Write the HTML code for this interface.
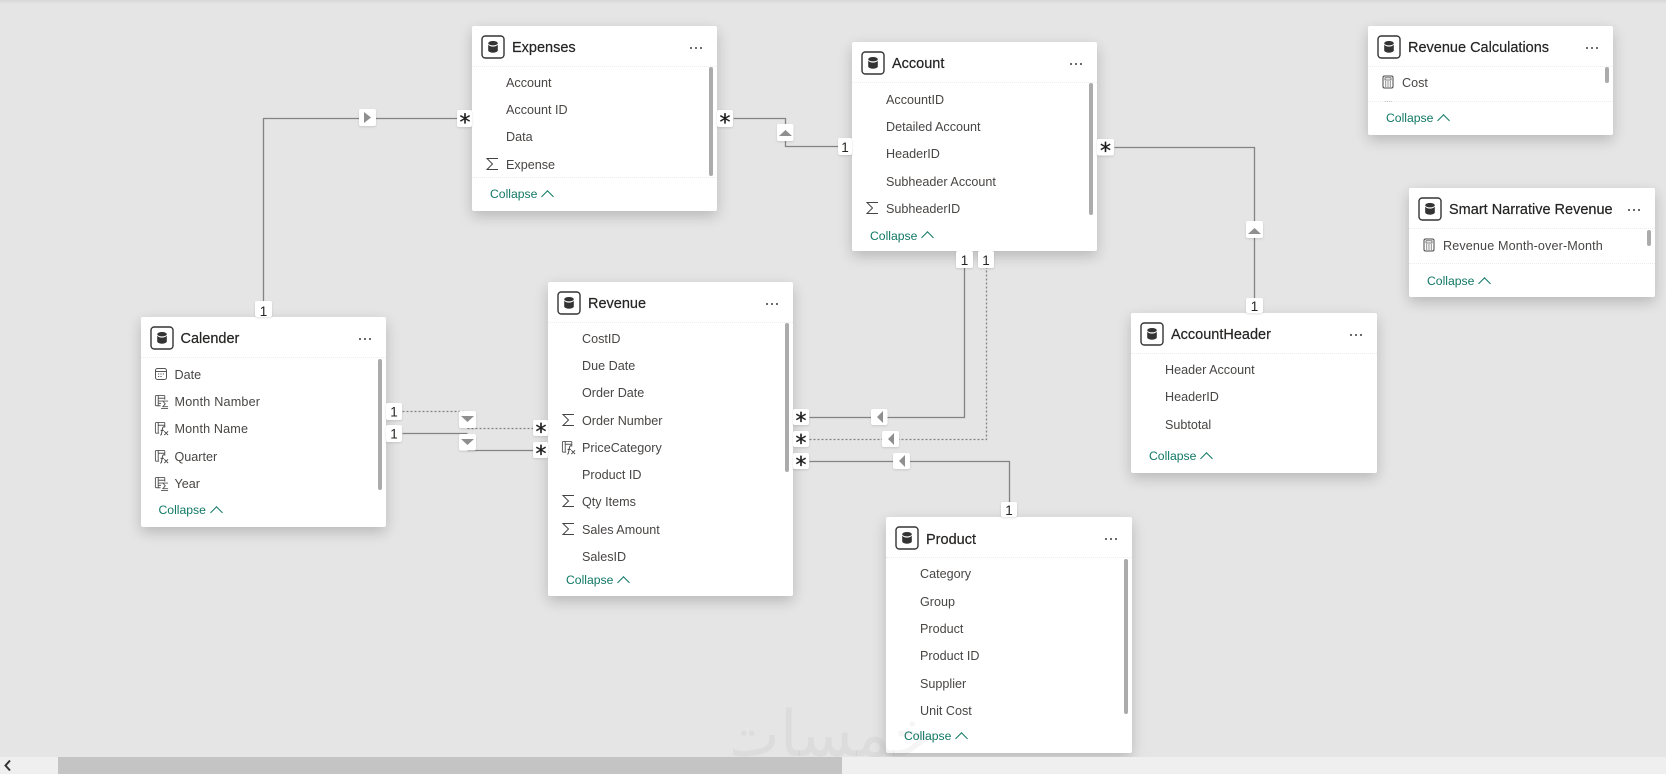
<!DOCTYPE html>
<html><head><meta charset="utf-8"><title>Model</title>
<style>
html,body{margin:0;padding:0;width:1666px;height:774px;overflow:hidden;background:#e5e5e5}
body{position:relative;font-family:"Liberation Sans",sans-serif}
#top{position:absolute;left:0;top:0;width:1666px;height:4px;background:linear-gradient(#d6d6d6,#e5e5e5)}
.c{position:absolute;background:#fff;border-radius:2px;box-shadow:0 5px 14px rgba(0,0,0,.2)}
.c>svg.db{position:absolute;left:9px;top:9px;width:24px;height:24px}
.t{position:absolute;left:40px;top:11px;line-height:22px;font-size:14.5px;color:#252423;white-space:nowrap;-webkit-text-stroke:.2px #252423}
.d{position:absolute;right:14px;top:20.5px;width:13px;height:3px}
.d:before{content:"";position:absolute;left:0;top:0;width:2.4px;height:2.4px;border-radius:50%;background:#3a3a3a;box-shadow:5px 0 #3a3a3a,10px 0 #3a3a3a}
.s{position:absolute;left:0;right:0;top:40px;height:0;border-top:1px dotted #ececec}
.f{position:absolute;left:34px;line-height:20px;margin-top:-9.5px;font-size:12.6px;color:#484644;white-space:nowrap}
.k{position:absolute;left:18px;line-height:20px;margin-top:-10px;font-size:12.2px;color:#117865;white-space:nowrap}
.k:after{content:"";display:inline-block;width:8px;height:8px;border-left:1px solid #117865;border-top:1px solid #117865;transform:rotate(45deg);margin-left:6px;position:relative;top:2.5px}
.b{position:absolute;width:4px;background:#ababab;border-radius:2px}
.i{position:absolute;left:13px;width:14px;height:14px;margin-top:-7px;fill:none;stroke:#444;stroke-width:1}
#wm{position:absolute;left:733px;top:690px;width:200px;height:67px;overflow:hidden;font-family:"DejaVu Sans",sans-serif;font-size:64px;line-height:90px;color:rgba(0,0,0,.04);text-align:center;white-space:nowrap;z-index:5}
#bar{position:absolute;left:0;top:757px;width:1666px;height:17px;background:#efefef;z-index:6}
#th{position:absolute;left:58px;top:0;width:784px;height:17px;background:#c4c4c4}
#ar{position:absolute;left:3px;top:2px;width:9px;height:13px}
svg#l{position:absolute;left:0;top:0;z-index:1}
.c{z-index:2}
svg#o{position:absolute;left:0;top:0;z-index:3}
</style></head><body>
<div id="top"></div>
<svg width="0" height="0" style="position:absolute"><defs>
<symbol id="db" viewBox="0 0 24 24"><rect x="1" y="1" width="22" height="22" rx="3.2" fill="#fff" stroke="#333" stroke-width="1.4"/><ellipse cx="12" cy="8.2" rx="4.8" ry="2.2" fill="#333"/><path d="M7.2 9.8v5.600c0 1.300 2.200 2.300 4.800 2.300s4.800-1 4.800-2.300V9.800c-1 1.200-2.800 1.800-4.800 1.800s-3.800-.6-4.800-1.800z" fill="#333"/></symbol>
<symbol id="sg" viewBox="0 0 14 14"><path d="M13 1.500H2L7.500 7 2 12.500h11" stroke="#444" stroke-width="1" fill="none"/></symbol>
<symbol id="ca" viewBox="0 0 14 14"><rect x="1.500" y="1.500" width="11" height="11" rx="2" fill="none" stroke="#555"/><path d="M1.500 4.500h11" stroke="#555"/><path d="M4 7h1.200M6.400 7h1.200M8.800 7h1.200M4 9.500h1.200M6.400 9.500h1.200" stroke="#555"/></symbol>
<symbol id="ts" viewBox="0 0 16 16"><path d="M7 12.500H2.500a1 1 0 0 1-1-1v-9a1 1 0 0 1 1-1h8a1 1 0 0 1 1 1V6M4.500 1.500v11M4.500 4.500h7M4.500 7.500h5M4.500 10h3" fill="none" stroke="#555"/><path d="M15 7.500H9.500L12 10.500 9.500 13.500H15M7.500 15.500H15" fill="none" stroke="#555"/></symbol>
<symbol id="fx" viewBox="0 0 16 16"><path d="M5.500 13H2.500a1 1 0 0 1-1-1V2.500a1 1 0 0 1 1-1h8a1 1 0 0 1 1 1V7M4.500 1.500V13M4.500 4.500h7" fill="none" stroke="#555"/><path d="M6.500 15c1.500 0 1.500-1 1.800-3l.7-4c.3-1.500 1-2 2-2M7 10h3.500M11 11l4 4M15 11l-4 4" fill="none" stroke="#444"/></symbol>
<symbol id="cl" viewBox="0 0 14 14"><rect x="2" y="1" width="10" height="12" rx="1.500" fill="none" stroke="#444"/><rect x="4" y="2.800" width="6" height="2.200" fill="none" stroke="#444" stroke-width=".7"/><path d="M4 7h1.200M6.400 7h1.200M8.800 7h1.200M4 9h1.200M6.400 9h1.200M8.800 9h1.200M4 11h1.200M6.400 11h1.200M8.800 11h1.200" stroke="#444"/></symbol>
</defs></svg>

<svg id="l" width="1666" height="774" fill="none" stroke="#838383" stroke-width="1.300">
<g transform="translate(.5 .5)">
<path d="M263 301V118H458"/>
<path d="M733 118H785V146H840"/>
<path d="M1114 147H1254V300"/>
<path d="M964 266V417H809"/>
<path d="M986 266V439H809" stroke-dasharray="2 2"/>
<path d="M1009 503V461H809"/>
<path d="M402 411H467M467 428H533" stroke-dasharray="2 2"/>
<path d="M402 433H467M467 450H533"/>
</g>
</svg>

<div class="c" style="left:472px;top:26px;width:245px;height:185px">
<svg class="db"><use href="#db"/></svg><div class="t">Expenses</div><div class="d"></div><div class="s"></div>
<div class="f" style="top:56px">Account</div><div class="f" style="top:83px">Account ID</div><div class="f" style="top:110px">Data</div><svg class="i" style="top:138px"><use href="#sg"/></svg><div class="f" style="top:138px">Expense</div>
<div class="s" style="top:151px"></div><div class="k" style="top:168px">Collapse</div><div class="b" style="left:237px;top:41px;height:109px"></div>
</div>

<div class="c" style="left:852px;top:42px;width:245px;height:209px">
<svg class="db"><use href="#db"/></svg><div class="t">Account</div><div class="d"></div><div class="s"></div>
<div class="f" style="top:57px">AccountID</div><div class="f" style="top:84.500px">Detailed Account</div><div class="f" style="top:111.500px">HeaderID</div><div class="f" style="top:139.500px">Subheader Account</div><svg class="i" style="top:166px"><use href="#sg"/></svg><div class="f" style="top:166px">SubheaderID</div>
<div class="k" style="top:193.500px">Collapse</div><div class="b" style="left:237px;top:41px;height:132px"></div>
</div>

<div class="c" style="left:1368px;top:26px;width:245px;height:109px">
<svg class="db"><use href="#db"/></svg><div class="t">Revenue Calculations</div><div class="d"></div><div class="s"></div>
<svg class="i" style="top:56px"><use href="#cl"/></svg><div class="f" style="top:56px">Cost</div>
<div style="position:absolute;left:17px;top:75px;width:8px;height:1px;background:#ccc"></div>
<div class="s" style="top:75px"></div><div class="k" style="top:92px">Collapse</div><div class="b" style="left:237px;top:41px;height:16px"></div>
</div>

<div class="c" style="left:1409px;top:188px;width:246px;height:109px">
<svg class="db"><use href="#db"/></svg><div class="t">Smart Narrative Revenue</div><div class="d"></div><div class="s"></div>
<svg class="i" style="top:57px"><use href="#cl"/></svg><div class="f" style="top:57px;letter-spacing:.13px">Revenue Month-over-Month</div>
<div class="s" style="top:75px"></div><div class="k" style="top:93px">Collapse</div><div class="b" style="left:238px;top:42px;height:16px"></div>
</div>

<div class="c" style="left:140.500px;top:317px;width:245.500px;height:210px">
<svg class="db"><use href="#db"/></svg><div class="t">Calender</div><div class="d"></div><div class="s"></div>
<svg class="i" style="top:57px"><use href="#ca"/></svg><div class="f" style="top:57px">Date</div>
<svg class="i" style="top:84px;width:15px;height:15px"><use href="#ts"/></svg><div class="f" style="top:84px;letter-spacing:.2px">Month Namber</div>
<svg class="i" style="top:111px;width:15px;height:15px"><use href="#fx"/></svg><div class="f" style="top:111px;letter-spacing:.15px">Month Name</div>
<svg class="i" style="top:139px;width:15px;height:15px"><use href="#fx"/></svg><div class="f" style="top:139px">Quarter</div>
<svg class="i" style="top:166px;width:15px;height:15px"><use href="#ts"/></svg><div class="f" style="top:166px">Year</div>
<div class="k" style="top:193px">Collapse</div><div class="b" style="left:237.500px;top:42px;height:131px"></div>
</div>

<div class="c" style="left:548px;top:282px;width:245px;height:314px">
<svg class="db"><use href="#db"/></svg><div class="t">Revenue</div><div class="d"></div><div class="s"></div>
<div class="f" style="top:56px">CostID</div><div class="f" style="top:83px">Due Date</div><div class="f" style="top:110px">Order Date</div>
<svg class="i" style="top:138px"><use href="#sg"/></svg><div class="f" style="top:138px">Order Number</div>
<svg class="i" style="top:165px;width:15px;height:15px"><use href="#fx"/></svg><div class="f" style="top:165px">PriceCategory</div>
<div class="f" style="top:192px">Product ID</div>
<svg class="i" style="top:219px"><use href="#sg"/></svg><div class="f" style="top:219px">Qty Items</div>
<svg class="i" style="top:247px"><use href="#sg"/></svg><div class="f" style="top:247px">Sales Amount</div>
<div class="f" style="top:274px">SalesID</div>
<div class="k" style="top:298px">Collapse</div><div class="b" style="left:237px;top:41px;height:149px"></div>
</div>

<div class="c" style="left:1131px;top:313px;width:246px;height:160px">
<svg class="db"><use href="#db"/></svg><div class="t">AccountHeader</div><div class="d"></div><div class="s"></div>
<div class="f" style="top:56px">Header Account</div><div class="f" style="top:83.500px">HeaderID</div><div class="f" style="top:111px">Subtotal</div>
<div class="k" style="top:143px">Collapse</div>
</div>

<div class="c" style="left:886px;top:517px;width:246px;height:236px">
<svg class="db"><use href="#db"/></svg><div class="t" style="top:12px">Product</div><div class="d"></div><div class="s"></div>
<div class="f" style="top:56.500px">Category</div><div class="f" style="top:84px">Group</div><div class="f" style="top:111px">Product</div><div class="f" style="top:138.500px">Product ID</div><div class="f" style="top:166px">Supplier</div><div class="f" style="top:193.500px">Unit Cost</div>
<div class="k" style="top:219px">Collapse</div><div class="b" style="left:238px;top:42px;height:155px"></div>
</div>

<svg id="o" width="1666" height="774" style="filter:drop-shadow(0 1px 1px rgba(0,0,0,.12))">
<g fill="#fff">
<rect x="457" y="110" width="15" height="17" rx="2"/><rect x="717" y="110" width="16" height="17" rx="2"/>
<rect x="359" y="109" width="17" height="17" rx="2"/>
<rect x="777" y="124" width="16.500" height="17" rx="2"/><rect x="838" y="138" width="14" height="17" rx="2"/>
<rect x="1097" y="139" width="17" height="16.500" rx="2"/><rect x="1246" y="221" width="17" height="17" rx="2"/>
<rect x="1246" y="298" width="17" height="15" rx="2"/>
<rect x="956" y="251" width="17" height="17" rx="2"/><rect x="978" y="251" width="16" height="17" rx="2"/>
<rect x="793" y="409" width="16" height="16" rx="2"/><rect x="793" y="431" width="16" height="16" rx="2"/><rect x="793" y="453" width="16" height="16" rx="2"/>
<rect x="871" y="409" width="16.500" height="16" rx="2"/><rect x="882" y="431" width="17" height="16" rx="2"/><rect x="893" y="453" width="17" height="16" rx="2"/>
<rect x="1001" y="502" width="16" height="15" rx="2"/>
<rect x="386" y="403" width="16" height="17" rx="2"/><rect x="386" y="425" width="16" height="17" rx="2"/>
<rect x="459" y="411" width="17" height="17" rx="2"/><rect x="459" y="434" width="17" height="16.500" rx="2"/>
<rect x="533" y="420" width="15" height="16" rx="2"/><rect x="533" y="442" width="15" height="16" rx="2"/>
<rect x="255" y="301" width="17" height="16" rx="2"/>
</g>
<g fill="#8f8f8f">
<path d="M364 112v11l7-5.500z"/>
<path d="M779 136h13l-6.500-6z"/><path d="M1248 234h13l-6.500-6z"/>
<path d="M883 411v12l-6-6z"/><path d="M894 433v12l-6-6z"/><path d="M905 455v12l-6-6z"/>
<path d="M461 416h13l-6.500 6z"/><path d="M461 439h13l-6.500 6z"/>
</g>
<g font-family="Liberation Sans" font-size="13.500" fill="#252423" text-anchor="middle">
<text x="845" y="152">1</text><text x="964.500" y="265">1</text><text x="986" y="265">1</text>
<text x="1254.500" y="311">1</text><text x="1009" y="515">1</text><text x="263.500" y="316">1</text>
<text x="394" y="416.500">1</text><text x="394" y="438.500">1</text>
</g>
<g font-family="DejaVu Sans" font-size="22" fill="#1e1e1e" stroke="#1e1e1e" stroke-width=".3" text-anchor="middle">
<text x="465" y="130">*</text><text x="725" y="130">*</text><text x="1105.500" y="158.500">*</text>
<text x="801" y="428.500">*</text><text x="801" y="450.500">*</text><text x="801" y="472.500">*</text>
<text x="541" y="439.500">*</text><text x="541" y="461.500">*</text>
</g>
</svg>

<div id="wm" dir="rtl" lang="ar">خمسات</div>
<div id="bar"><div id="th"></div><svg id="ar" viewBox="0 0 9 13"><path d="M7 1.500L2.500 6.500 7 11.500" fill="none" stroke="#333" stroke-width="2"/></svg></div>
</body></html>
